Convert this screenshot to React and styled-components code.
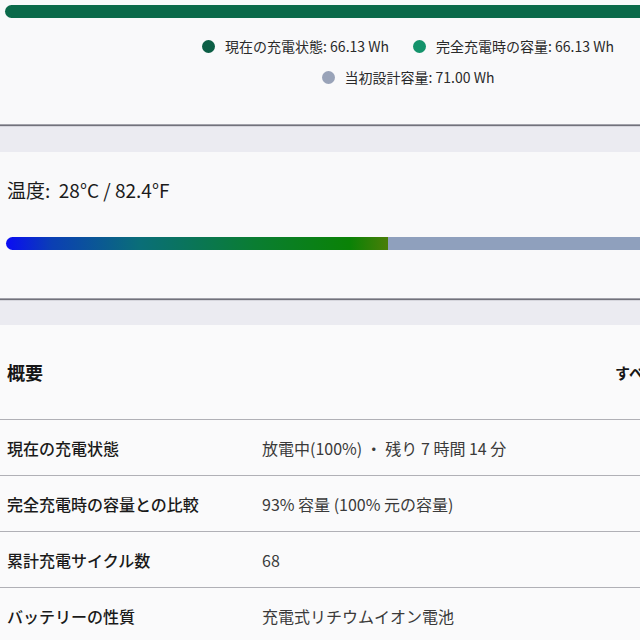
import React from 'react'
import styled, { createGlobalStyle } from 'styled-components'

const Global = createGlobalStyle`
  html, body {
    margin: 0;
    padding: 0;
    background: #ebebf1;
    font-family: "Noto Sans CJK JP", "Noto Sans", sans-serif;
    overflow: hidden;
  }
`

const Page = styled.div`
  width: 640px;
  height: 640px;
  overflow: hidden;
  display: flex;
  flex-direction: column;
`

const Card = styled.section`
  background: #f9f9fa;
  box-shadow: 0 1px 0 #a2a2aa, 0 2px 1px #72727b;
  overflow: hidden;
  flex-shrink: 0;
  height: ${props => props.h}px;
  margin-bottom: ${props => props.gap || 0}px;
`

const CapacityBar = styled.div`
  margin: 5px 0 0 5px;
  width: 660px;
  height: 13px;
  border-radius: 7px 0 0 7px;
  background: #0b6a4a;
`

const Legend = styled.div`
  display: flex;
  flex-wrap: wrap;
  justify-content: center;
  column-gap: 24px;
  row-gap: 11px;
  padding: 18px 0 0 176px;
  width: 464px;
`

const LegendItem = styled.div`
  display: flex;
  align-items: center;
  gap: 10px;
  font-size: 14px;
  color: #2a2a2a;
  white-space: nowrap;
  line-height: 20px;
`

const Dot = styled.span`
  width: 13px;
  height: 13px;
  border-radius: 50%;
  background: ${props => props.color};
`

const TempText = styled.div`
  padding: 26px 0 0 7px;
  font-size: 19px;
  line-height: 24px;
  color: #1b1b1b;
`

const TempBar = styled.div`
  display: flex;
  margin: 35px 0 0 6px;
  height: 13px;
`

const TempFill = styled.div`
  width: 382px;
  border-radius: 7px 0 0 7px;
  background: linear-gradient(90deg, #0a0cf4 0%, #0b3fb4 12%, #0a6e78 35%, #0a7d32 65%, #0a8206 90%, #4a7e08 100%);
`

const TempRest = styled.div`
  flex: 1;
  background: #8fa0bd;
`

const Summary = styled.section`
  background: #fafafb;
  flex: 1;
`

const SummaryHead = styled.div`
  display: flex;
  justify-content: space-between;
  align-items: center;
  height: 94px;
  padding-left: 7px;
  border-bottom: 1px solid #b0b0b6;
  font-size: 18px;
  font-weight: 600;
  color: #161616;
`

const MoreLink = styled.span`
  font-size: 15px;
  width: 25px;
  overflow: hidden;
  white-space: nowrap;
`

const Row = styled.div`
  display: grid;
  grid-template-columns: 255px 1fr;
  align-items: center;
  height: 55px;
  padding-left: 7px;
  border-bottom: 1px solid #b0b0b6;
  font-size: 16px;
`

const Label = styled.div`
  font-weight: 500;
  color: #1a1a1a;
`

const Value = styled.div`
  color: #3a3a3a;
`

const rows = [
  ['現在の充電状態', '放電中(100%) ・ 残り 7 時間 14 分'],
  ['完全充電時の容量との比較', '93% 容量 (100% 元の容量)'],
  ['累計充電サイクル数', '68'],
  ['バッテリーの性質', '充電式リチウムイオン電池']
]

const App = () => (
  <Page>
    <Global />
    <Card h={124} gap={28}>
      <CapacityBar />
      <Legend>
        <LegendItem><Dot color="#0c5e45" />現在の充電状態: 66.13 Wh</LegendItem>
        <LegendItem><Dot color="#14936b" />完全充電時の容量: 66.13 Wh</LegendItem>
        <LegendItem><Dot color="#99a3b8" />当初設計容量: 71.00 Wh</LegendItem>
      </Legend>
    </Card>
    <Card h={146} gap={27}>
      <TempText>温度:&nbsp; 28°C / 82.4°F</TempText>
      <TempBar>
        <TempFill />
        <TempRest />
      </TempBar>
    </Card>
    <Summary>
      <SummaryHead>
        概要
        <MoreLink>すべて表示</MoreLink>
      </SummaryHead>
      {rows.map(([label, value]) => (
        <Row key={label}>
          <Label>{label}</Label>
          <Value>{value}</Value>
        </Row>
      ))}
    </Summary>
  </Page>
)

export default App
